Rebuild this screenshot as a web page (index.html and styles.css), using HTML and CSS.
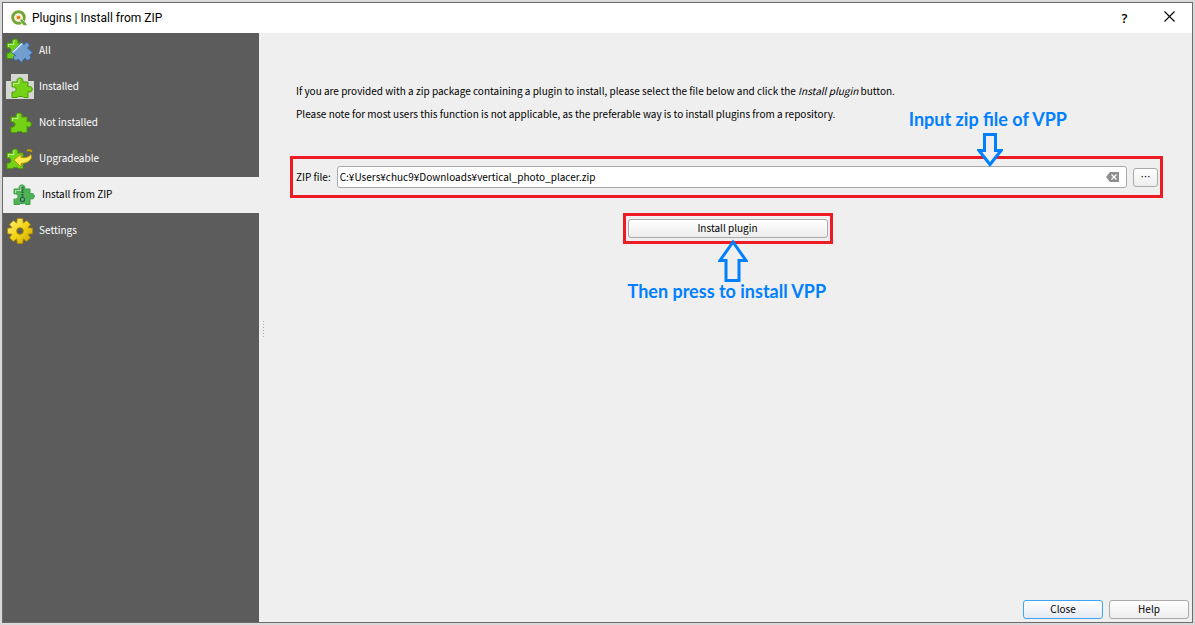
FILE: index.html
```html
<!DOCTYPE html>
<html lang="en">
<head>
<meta charset="utf-8">
<title>Plugins | Install from ZIP</title>
<link rel="stylesheet" href="styles.css">
</head>
<body>
<svg class="defs" aria-hidden="true">
  <defs>
    <linearGradient id="gold" x1="0" y1="0" x2="1" y2="1"><stop offset="0" stop-color="#fff08a"/><stop offset=".5" stop-color="#f3d416"/><stop offset="1" stop-color="#c9a400"/></linearGradient>
    <path id="piece" d="M1 5H6.500C5.600 3.500 6 1 9 1S12.400 3.500 11.500 5H17V10C19 8.800 21.300 9.500 21.300 12.200S19 15.600 17 14.500V20.500H12.500L11.500 19.500H7.500L6.500 20.500H1V15C3.500 15.500 5 14.500 5 12.400S3.500 9.500 1 10Z"/>
    <path id="shine" d="M2.500 9V6.500H8C7.500 4 7.500 2.500 9 2.500" fill="none" stroke="#fff" stroke-opacity=".55"/>
  </defs>
</svg>
<div class="window">
  <header class="titlebar">
    <svg class="logo" viewBox="0 0 16 16"><circle cx="7.500" cy="7.500" r="5.800" fill="none" stroke="#73a839" stroke-width="3"/><circle cx="7.500" cy="7.500" r="3.200" fill="#fbe3c2"/><circle cx="7.500" cy="7.500" r="1.800" fill="#ee7913"/><path d="M9 9L11 9L16 14V15.500H12.500L9 11Z" fill="#73a839" stroke="#fff" stroke-width=".6"/></svg>
    <h1 class="title">Plugins | Install from ZIP</h1>
    <button class="caption-button help-mark" type="button">?</button>
    <button class="caption-button" type="button" aria-label="Close window"><svg class="cross" viewBox="0 0 11 11"><path d="M.5.5L10.500 10.500M10.500.5L.5 10.500" stroke="#000" stroke-width="1.100"/></svg></button>
  </header>
  <div class="content">
    <nav class="sidebar">
      <a class="item" href="#all"><svg class="icon" viewBox="0 0 28 28"><use href="#piece" transform="translate(0 1)" fill="#6fcf16" stroke="#3f9a0a"/><use href="#shine" transform="translate(0 1)"/><path d="M5.500 15.500L16 5.500L18 7.500C19 5.500 22 5 23 7S22.500 10.500 21.500 11L26.500 15.500L23.500 18.500C25 19.500 25 22 23 23S19.500 22 19 21L15.500 25.500L12 22C10.500 24 8 23.500 7.500 21.500S8.500 18.500 9.500 18.500Z" fill="#729fcf" stroke="#3465a4"/><path d="M6.500 15.500L16 6.500" stroke="#dceafa" stroke-width="1.500"/></svg><span>All</span></a>
      <a class="item" href="#installed"><svg class="icon" viewBox="0 0 28 28"><path d="M5 1H22V8H28V26H0V8H5Z" fill="#d3d7cf"/><use href="#piece" transform="translate(5 4)" fill="#73d216" stroke="#4e9a06"/><use href="#shine" transform="translate(5 4)"/></svg><span>Installed</span></a>
      <a class="item" href="#not-installed"><svg class="icon" viewBox="0 0 28 28"><use href="#piece" transform="translate(4 3)" fill="#73d216" stroke="#4e9a06"/><use href="#shine" transform="translate(4 3)"/></svg><span>Not installed</span></a>
      <a class="item" href="#upgradeable"><svg class="icon" viewBox="0 0 28 28"><use href="#piece" transform="translate(0 3)" fill="#73d216" stroke="#4e9a06"/><use href="#shine" transform="translate(0 3)"/><path d="M8 15L15 9V12.500C20 13 23 12 25 9.500C27 14 23 18 15 18.500V22Z" fill="#fce94f" stroke="#a88d00" stroke-width=".8"/><path d="M21 6C23 4.500 25 5 25.500 7" fill="none" stroke="#c49a00" stroke-width="2"/></svg><span>Upgradeable</span></a>
      <a class="item selected" href="#zip" aria-current="page"><svg class="icon" viewBox="0 0 28 28"><use href="#piece" transform="translate(4 3)" fill="#4fb356" stroke="#3b9f45"/><use href="#shine" transform="translate(4 3)"/><path d="M13.500 6V17" stroke="#235d50" stroke-width="2" stroke-dasharray="1.500 .8"/><circle cx="13.500" cy="18.500" r="2" fill="#6abd73" stroke="#235d50" stroke-width="1.200"/></svg><span>Install from ZIP</span></a>
      <a class="item" href="#settings"><svg class="icon" viewBox="0 0 28 28"><path d="M11.300 1.500H16.700L17.300 6L20.700 3.600L24.500 7.400L22 10.700L26.500 11.300V16.700L22 17.300L24.500 20.700L20.700 24.500L17.300 22L16.700 26.500H11.300L10.700 22L7.300 24.500L3.500 20.700L6 17.300L1.500 16.700V11.300L6 10.700L3.500 7.400L7.300 3.600L10.700 6Z" fill="url(#gold)" stroke="#a88700" stroke-width=".8"/><circle cx="14" cy="14" r="3.300" fill="#5c5c5c" stroke="#a88700"/></svg><span>Settings</span></a>
    </nav>
    <div class="splitter"><span class="grip"></span></div>
    <main class="panel">
      <div class="intro">
        <p>If you are provided with a zip package containing a plugin to install, please select the file below and click the <em>Install plugin</em> button.</p>
        <p>Please note for most users this function is not applicable, as the preferable way is to install plugins from a repository.</p>
      </div>
      <div class="marked file-row">
        <label for="zip-file">ZIP file:</label>
        <div class="field">
          <input id="zip-file" type="text" value="C:¥Users¥chuc9¥Downloads¥vertical_photo_placer.zip">
          <button class="clear" type="button" aria-label="Clear"><svg viewBox="0 0 13 10"><path d="M4 0H13V10H4L0 5Z" fill="#8e8e8e"/><path d="M5.500 2.500L10.500 7.500M10.500 2.500L5.500 7.500" stroke="#fff" stroke-width="1.200"/></svg></button>
        </div>
        <button class="button browse" type="button" aria-label="Browse">…</button>
        <div class="note note-input"><span>Input zip file of VPP</span><svg class="arrow-down" viewBox="0 0 26 34"><path d="M7.500 1.500H18.500V17.500H24L13 31.500L2 17.500H7.500Z" fill="#efefef" stroke="#0080ff" stroke-width="3"/></svg></div>
      </div>
      <div class="marked install-row">
        <button class="button install" type="button">Install plugin</button>
        <div class="note note-install"><svg class="arrow-up" viewBox="0 0 30 43"><path d="M8 41.500H21V21.500H28L15 3L2 21.500H8Z" fill="#efefef" stroke="#0080ff" stroke-width="3"/></svg><span>Then press to install VPP</span></div>
      </div>
      <footer class="actions">
        <button class="button default" type="button">Close</button>
        <button class="button" type="button">Help</button>
      </footer>
    </main>
  </div>
</div>
</body>
</html>
```
FILE: styles.css
```css
* { box-sizing: border-box; }
body {
  margin: 0;
  padding: 2px;
  height: 100vh;
  display: flex;
  background: #d9d9d9;
  color: #000;
  font: 10px/16px "Noto Sans CJK JP", sans-serif;
}
button, input { font: inherit; color: inherit; }
.defs { position: absolute; width: 0; height: 0; }
.window {
  flex: 1;
  display: flex;
  flex-direction: column;
  border: 1px solid #6b6b6b;
  background: #efefef;
}
.titlebar {
  display: flex;
  align-items: center;
  height: 30px;
  padding-left: 8px;
  background: #fff;
}
.logo { width: 16px; height: 16px; }
.title {
  flex: 1;
  margin: 0 0 0 5px;
  font: 12px/16px Roboto, sans-serif;
}
.caption-button {
  width: 45px;
  height: 30px;
  padding: 0;
  border: 0;
  background: none;
}
.help-mark { font: 600 13px "Open Sans", sans-serif; }
.cross { width: 11px; height: 11px; }
.content { flex: 1; display: flex; }
.sidebar { width: 256px; background: #5c5c5c; }
.item {
  display: flex;
  align-items: center;
  gap: 5px;
  height: 36px;
  padding-left: 3px;
  color: #fff;
  text-decoration: none;
}
.item span { padding-bottom: 2px; }
.item.selected { padding-left: 6px; background: #efefef; color: #000; }
.icon { width: 28px; height: 28px; }
.splitter { display: flex; align-items: center; width: 10px; padding: 4px 0 0 4px; }
.grip {
  width: 1px;
  height: 18px;
  background: repeating-linear-gradient(#aaa 0 1px, transparent 1px 3px);
}
.panel {
  flex: 1;
  display: flex;
  flex-direction: column;
  padding: 50px 3px 3px 21px;
}
.intro { padding-left: 6px; }
.intro p { margin: 0 0 7px; }
.marked { position: relative; border: 3px solid #ed1c24; }
.file-row {
  display: flex;
  align-items: center;
  gap: 6px;
  height: 42px;
  margin: 27px 26px 0 0;
  padding: 0 2px 0 3px;
}
.field {
  flex: 1;
  display: flex;
  align-items: center;
  height: 22px;
  padding: 0 7px 0 2px;
  border: 1px solid #aaa;
  border-radius: 3px;
  background: #fff;
}
.field input {
  flex: 1;
  min-width: 0;
  padding: 0;
  border: 0;
  outline: 0;
  background: none;
}
.clear { display: flex; padding: 0; border: 0; background: none; }
.clear svg { width: 13px; height: 10px; }
.button {
  width: 80px;
  height: 19px;
  padding: 0 0 2px;
  border: 1px solid #aaa;
  border-radius: 3px;
  background: linear-gradient(#fff, #ededed);
  line-height: 15px;
}
.browse { width: 25px; }
.install-row {
  align-self: center;
  width: 210px;
  margin: 15px 24px 0 0;
  padding: 3px 2px;
}
.install { display: block; width: 100%; }
.default { border-color: #3da5f4; background: linear-gradient(#fff, #e4eaf2); }
.note {
  position: absolute;
  display: flex;
  flex-direction: column;
  align-items: center;
  color: #0080ff;
  font: bold 18px/18px Lato, sans-serif;
  white-space: nowrap;
  pointer-events: none;
}
.note-input { right: 93px; bottom: 28px; gap: 5px; }
.note-install { top: 23px; left: 2px; }
.arrow-down { width: 26px; height: 34px; margin-left: 5px; }
.arrow-up { width: 30px; height: 43px; margin-left: 12px; }
.actions {
  display: flex;
  justify-content: flex-end;
  gap: 6px;
  margin-top: auto;
}
```
